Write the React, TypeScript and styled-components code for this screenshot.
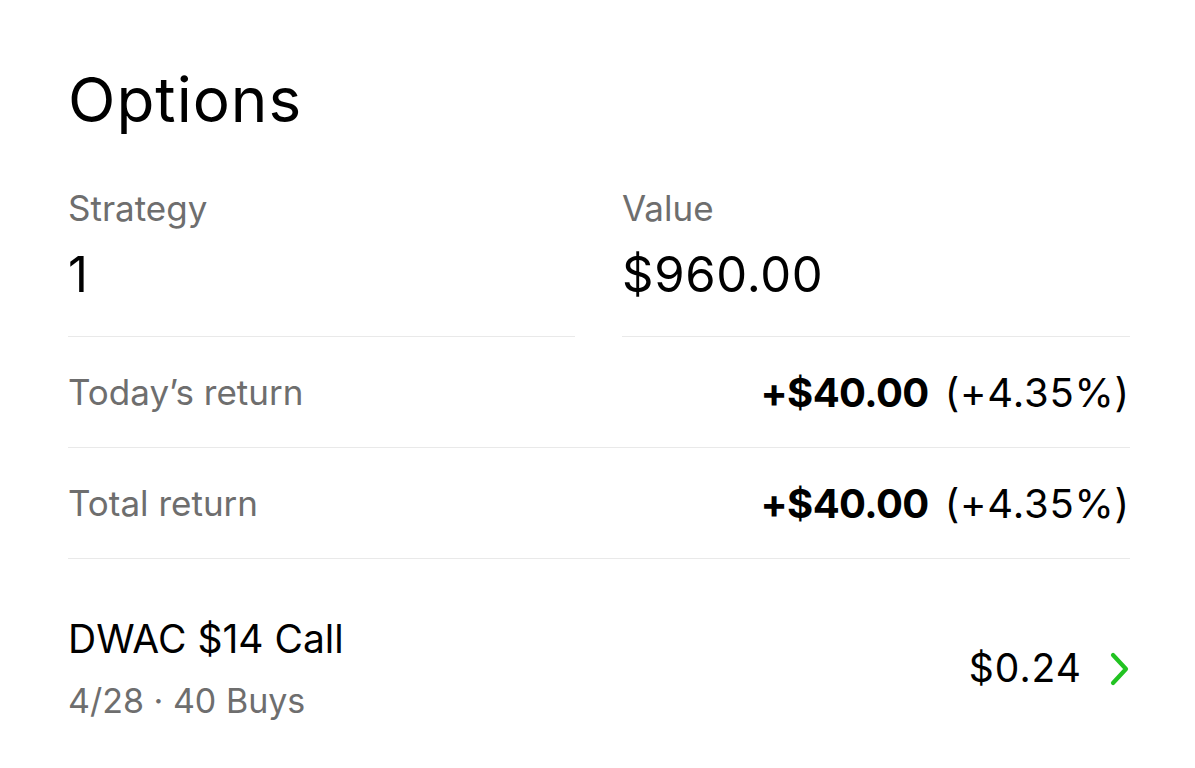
import React from "react";
import styled, { createGlobalStyle } from "styled-components";

const Global = createGlobalStyle`
  html, body { margin: 0; padding: 0; background: #fff; }
  body { font-family: Inter, "Liberation Sans", Arial, sans-serif; color: #000; -webkit-font-smoothing: antialiased; }
`;

const Page = styled.div`
  width: 1195px;
  height: 768px;
  box-sizing: border-box;
  padding: 64px 65px 0 68px;
  overflow: hidden;
`;

const Title = styled.h1`
  margin: 0;
  font-size: 62px;
  font-weight: 400;
  line-height: 72px;
  letter-spacing: 1px;
`;

const StatGrid = styled.div`
  display: grid;
  grid-template-columns: 507px 1fr;
  column-gap: 47px;
  margin-top: 50px;
`;

const Stat = styled.div`
  display: flex;
  flex-direction: column;
  border-bottom: 1.5px solid #e9e9e9;
  padding-bottom: 33px;
`;

const Label = styled.div`
  font-size: 35px;
  line-height: 44px;
  color: #6e6e6e;
`;

const BigValue = styled.div`
  font-size: 49px;
  line-height: 56px;
  letter-spacing: 0.7px;
  margin-top: 17px;
`;

const Row = styled.div`
  display: flex;
  justify-content: space-between;
  align-items: center;
  height: 111px;
  box-sizing: border-box;
  border-bottom: 1.5px solid #e9e9e9;
`;

const RowValue = styled.div`
  font-size: 40px;
  line-height: 44px;
  color: #000;
  letter-spacing: 0.8px;
  margin-top: 2px;
`;

const Strong = styled.span`
  font-weight: 700;
  letter-spacing: -0.6px;
  margin-right: 4px;
`;

const Position = styled.div`
  display: flex;
  justify-content: space-between;
  align-items: center;
  padding-top: 56px;
`;

const PosLeft = styled.div`
  display: flex;
  flex-direction: column;
`;

const PosName = styled.div`
  font-size: 39px;
  line-height: 48px;
`;

const PosSub = styled.div`
  font-size: 34px;
  line-height: 44px;
  color: #6e6e6e;
  margin-top: 16px;
`;

const PosRight = styled.div`
  display: flex;
  align-items: center;
  gap: 28px;
  font-size: 39px;
  line-height: 44px;
  letter-spacing: 1px;
`;

const Price = styled.span`
  margin-top: -3px;
`;

const Chevron = () => (
  <svg width="20" height="34" viewBox="0 0 20 34" fill="none">
    <path d="M3 3 L16 17 L3 31" stroke="#22c322" strokeWidth="4.2" strokeLinecap="round" strokeLinejoin="round" />
  </svg>
);

export default function App() {
  return (
    <>
      <Global />
      <Page>
        <Title>Options</Title>
        <StatGrid>
          <Stat>
            <Label>Strategy</Label>
            <BigValue>1</BigValue>
          </Stat>
          <Stat>
            <Label>Value</Label>
            <BigValue>$960.00</BigValue>
          </Stat>
        </StatGrid>
        <Row>
          <Label>Today’s return</Label>
          <RowValue>
            <Strong>+$40.00</Strong> (+4.35%)
          </RowValue>
        </Row>
        <Row>
          <Label>Total return</Label>
          <RowValue>
            <Strong>+$40.00</Strong> (+4.35%)
          </RowValue>
        </Row>
        <Position>
          <PosLeft>
            <PosName>DWAC $14 Call</PosName>
            <PosSub>4/28 · 40 Buys</PosSub>
          </PosLeft>
          <PosRight>
            <Price>$0.24</Price>
            <Chevron />
          </PosRight>
        </Position>
      </Page>
    </>
  );
}
